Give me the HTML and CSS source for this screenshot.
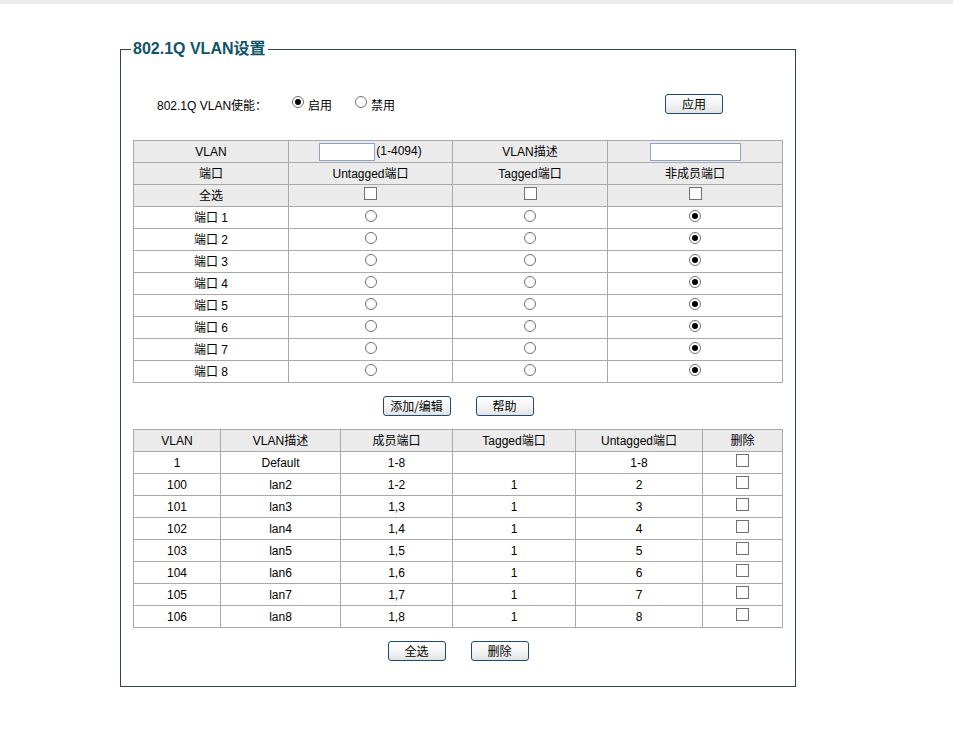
FILE: index.html
```html
<!DOCTYPE html>
<html lang="zh-CN">
  <head>
    <meta charset="UTF-8" />
    <meta name="viewport" content="width=device-width, initial-scale=1.0" />
    <link rel="stylesheet" href="styles.css">
    <title>802.1Q VLAN设置</title>
  </head>
  <body>
    <div class="topbar"></div>

    <fieldset class="panel">
      <legend>802.1Q VLAN设置</legend>

      <div class="enable-row">
        <span class="enable-label">802.1Q VLAN使能：</span>
        <label class="opt"><input type="radio" name="en" checked />启用</label>
        <label class="opt"><input type="radio" name="en" />禁用</label>
        <button class="btn btn-apply">应用</button>
      </div>

      <table class="grid ports">
        <colgroup>
          <col class="c1" /><col class="c2" /><col class="c3" /><col class="c4" />
        </colgroup>
        <tr class="head">
          <td>VLAN</td>
          <td><input type="text" class="vid" /><span class="hint">(1-4094)</span></td>
          <td>VLAN描述</td>
          <td><input type="text" class="vdesc" /></td>
        </tr>
        <tr class="head">
          <td>端口</td>
          <td>Untagged端口</td>
          <td>Tagged端口</td>
          <td>非成员端口</td>
        </tr>
        <tr class="head">
          <td>全选</td>
          <td><input type="checkbox" /></td>
          <td><input type="checkbox" /></td>
          <td><input type="checkbox" /></td>
        </tr>
      </table>

      <div class="btn-row">
        <button class="btn btn-wide">添加/编辑</button>
        <button class="btn">帮助</button>
      </div>

      <table class="grid vlans">
        <colgroup>
          <col class="v1" /><col class="v2" /><col class="v3" /><col class="v4" /><col class="v5" /><col class="v6" />
        </colgroup>
        <tr class="head">
          <td>VLAN</td>
          <td>VLAN描述</td>
          <td>成员端口</td>
          <td>Tagged端口</td>
          <td>Untagged端口</td>
          <td>删除</td>
        </tr>
      </table>

      <div class="btn-row bottom">
        <button class="btn">全选</button>
        <button class="btn">删除</button>
      </div>
    </fieldset>

    <script>
      var ports = document.querySelector(".ports tbody");
      for (var i = 1; i <= 8; i++) {
        var tr = document.createElement("tr");
        tr.innerHTML =
          "<td>端口 " + i + "</td>" +
          '<td><input type="radio" name="p' + i + '" /></td>' +
          '<td><input type="radio" name="p' + i + '" /></td>' +
          '<td><input type="radio" name="p' + i + '" checked /></td>';
        ports.appendChild(tr);
      }

      var vlans = [
        ["1", "Default", "1-8", "", "1-8"],
        ["100", "lan2", "1-2", "1", "2"],
        ["101", "lan3", "1,3", "1", "3"],
        ["102", "lan4", "1,4", "1", "4"],
        ["103", "lan5", "1,5", "1", "5"],
        ["104", "lan6", "1,6", "1", "6"],
        ["105", "lan7", "1,7", "1", "7"],
        ["106", "lan8", "1,8", "1", "8"]
      ];
      var list = document.querySelector(".vlans tbody");
      vlans.forEach(function (v) {
        var tr = document.createElement("tr");
        tr.innerHTML =
          v.map(function (c) { return "<td>" + c + "</td>"; }).join("") +
          '<td><input type="checkbox" class="del" /></td>';
        list.appendChild(tr);
      });
    </script>
  </body>
</html>
```

FILE: styles.css
```css
html,
body {
  margin: 0;
  padding: 0;
  background: #fff;
  font-family: "Liberation Sans", Arial, "Noto Sans CJK SC", sans-serif;
  font-size: 12px;
  color: #000;
}

.topbar {
  height: 4px;
  background: #ebebeb;
}

.panel {
  box-sizing: border-box;
  width: 676px;
  margin: 36px 0 0 120px;
  padding: 0 12px 25px 12px;
  border: 1px solid #2f4351;
  min-width: 0;
}

.panel legend {
  margin-left: -2px;
  padding: 0 2px;
  font-size: 16px;
  font-weight: bold;
  line-height: 18px;
  color: #0f5468;
}

.enable-row {
  display: flex;
  align-items: center;
  height: 20px;
  margin-top: 36px;
  padding-left: 24px;
  padding-right: 60px;
}

.enable-label {
  width: 135px;
}

.opt {
  display: flex;
  align-items: center;
  margin-right: 23px;
}

/* custom radio / checkbox */
input[type="radio"],
input[type="checkbox"] {
  -webkit-appearance: none;
  appearance: none;
  box-sizing: border-box;
  width: 12px;
  height: 12px;
  margin: 0;
  border: 1px solid #707070;
  background: #fff;
  vertical-align: middle;
  position: relative;
}

input[type="radio"] {
  border-radius: 50%;
}

input[type="radio"]:checked::after {
  content: "";
  position: absolute;
  left: 2px;
  top: 2px;
  width: 6px;
  height: 6px;
  border-radius: 50%;
  background: #000;
}

input[type="checkbox"] {
  width: 13px;
  height: 13px;
}

.opt input[type="radio"] {
  margin: 0 4px 4px 0;
}

.btn-apply {
  margin-left: auto;
}

.del {
  background: #f4f4f4;
}

.grid {
  width: 649px;
  border-collapse: collapse;
  table-layout: fixed;
}

.grid td {
  height: 21px;
  padding: 0;
  border: 1px solid #a9a9a9;
  text-align: center;
  vertical-align: middle;
  line-height: 14px;
}

.grid td input {
  margin-bottom: 4px;
}

.grid td input[type="text"] {
  margin-bottom: 0;
}

.head td {
  background: #ebebeb;
}

.ports {
  margin-top: 26px;
}

.c1 { width: 155px; }
.c2 { width: 164px; }
.c3 { width: 155px; }
.c4 { width: 175px; }

.v1 { width: 87px; }
.v2 { width: 120px; }
.v3 { width: 112px; }
.v4 { width: 123px; }
.v5 { width: 127px; }
.v6 { width: 80px; }

input[type="text"] {
  box-sizing: border-box;
  height: 18px;
  margin: 0;
  padding: 0 2px;
  border: 1px solid #8aa3c4;
  background: #fff;
  font: inherit;
  vertical-align: middle;
}

.vid {
  width: 56px;
  margin-left: 2px;
}

.hint {
  margin-left: 1px;
}

.vdesc {
  width: 91px;
  margin-left: 2px;
}

.btn-row {
  display: flex;
  justify-content: center;
  gap: 25px;
  margin: 13px 0 13px 0;
}

.btn-row.bottom {
  margin: 13px 0 0 0;
}

.btn {
  box-sizing: border-box;
  width: 58px;
  height: 20px;
  padding: 0;
  border: 1px solid #1d4a78;
  border-radius: 3px;
  background: linear-gradient(#ffffff, #f2f2f2 60%, #e2e2e2);
  font-family: "Noto Sans CJK SC", "Liberation Sans", sans-serif;
  font-size: 12px;
  line-height: 18px;
  color: #000;
}

.btn-wide {
  width: 68px;
}
```
